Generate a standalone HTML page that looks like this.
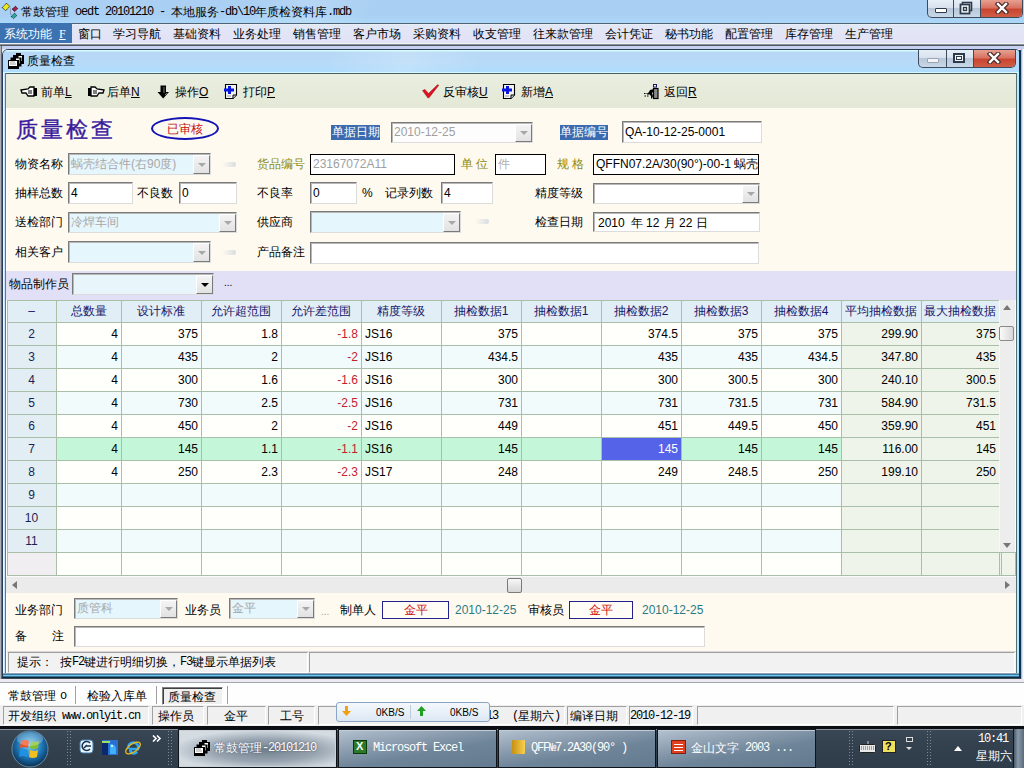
<!DOCTYPE html><html><head><meta charset="utf-8"><style>
*{margin:0;padding:0;box-sizing:border-box}
html,body{width:1024px;height:768px;overflow:hidden;background:#e9e9f3;font-family:"Liberation Sans",sans-serif;font-size:12px;color:#000}
.a{position:absolute}
.t{position:absolute;white-space:nowrap}
.inp{position:absolute;border-top:1px solid #7a7a7a;border-left:1px solid #7a7a7a;border-right:1px solid #dcdcdc;border-bottom:1px solid #dcdcdc;box-shadow:inset 1px 1px 0 #b8b8b8}
.dd{position:absolute;background:linear-gradient(#f4f4f4,#e2e2e2);border:1px solid #fff;border-right-color:#7a7a7a;border-bottom-color:#7a7a7a}
.dd i{position:absolute;left:4px;top:50%;margin-top:-2px;width:0;height:0;border-left:4px solid transparent;border-right:4px solid transparent;border-top:4px solid #a8a8a8}
u{text-decoration:underline}
.c{font-style:normal;display:inline-block;width:1em;text-align:center}
.ttl .c{width:25px}
</style></head><body>
<div class="a" style="left:0px;top:0px;width:1024px;height:23px;background:linear-gradient(180deg,#aacff2 0%,#a9d0f4 70%,#acd8f8 100%)"></div>
<div class="a" style="left:250px;top:0px;width:120px;height:23px;background:linear-gradient(100deg,transparent 0%,rgba(255,255,255,.15) 50%,transparent 100%)"></div>
<svg class="a" style="left:0px;top:0px" width="20" height="20" viewBox="0 0 20 20">
<path d="M10.5 8.5 H11 M10.5 8.5 V14.5 H12" fill="none" stroke="#8898b8" stroke-width="1"/>
<path d="M2.3 7.5 L6.5 3.2 L9.8 6.5 L5.5 10.8 Z" fill="#e8e820" stroke="#101000" stroke-width="1" stroke-dasharray="1 .6"/>
<path d="M12.3 9 L15.5 6.2 L17.8 8.6 L14.6 11.6 Z" fill="#a02050" stroke="#200010" stroke-width="1" stroke-dasharray="1 .6"/>
<path d="M11.3 16.5 L14.5 13.2 L16.8 15.5 L13.6 18.6 Z" fill="#30a8a0" stroke="#002020" stroke-width="1" stroke-dasharray="1 .6"/>
</svg>
<div class="t" style="left:21px;top:5px;font-size:12px;line-height:14px;color:#000;font-family:'Liberation Sans',sans-serif;"><i class="c">常</i><i class="c">鼓</i><i class="c">管</i><i class="c">理</i></div>
<div class="t" style="left:69px;top:5px;font-size:12px;line-height:14px;letter-spacing:-1.2px;color:#000;font-family:'Liberation Mono',monospace;">&nbsp;oedt&nbsp;20101210&nbsp;-&nbsp;</div>
<div class="t" style="left:171px;top:5px;font-size:12px;line-height:14px;color:#000;font-family:'Liberation Sans',sans-serif;"><i class="c">本</i><i class="c">地</i><i class="c">服</i><i class="c">务</i></div>
<div class="t" style="left:219px;top:5px;font-size:12px;line-height:14px;letter-spacing:-1.2px;color:#000;font-family:'Liberation Mono',monospace;">-db\10</div>
<div class="t" style="left:255px;top:5px;font-size:12px;line-height:14px;color:#000;font-family:'Liberation Sans',sans-serif;"><i class="c">年</i><i class="c">质</i><i class="c">检</i><i class="c">资</i><i class="c">料</i><i class="c">库</i></div>
<div class="t" style="left:327px;top:5px;font-size:12px;line-height:14px;letter-spacing:-1.2px;color:#000;font-family:'Liberation Mono',monospace;">.mdb</div>
<div class="a" style="left:927px;top:0px;width:96px;height:18px;border:1px solid #3c4a5c;border-top:none;border-radius:0 0 5px 5px;overflow:hidden;background:linear-gradient(180deg,#e6eef6 0%,#d8e2ee 45%,#b8c8da 50%,#c8d8e8 100%)"><div class="a" style="left:52px;top:0;width:43px;height:18px;background:linear-gradient(180deg,#e8a090 0%,#d87060 45%,#c84430 50%,#d06048 100%);border-left:1px solid #3c4a5c"></div><div class="a" style="left:25px;top:0;width:1px;height:18px;background:#3c4a5c"></div></div>
<div class="a" style="left:935px;top:8px;width:12px;height:5px;background:#fff;border:1px solid #2c3a4c;border-radius:1px"></div>
<svg class="a" style="left:959px;top:1px" width="14" height="14" viewBox="0 0 14 14"><rect x="3.5" y="1.5" width="9" height="8" fill="#fff" stroke="#2c3a4c" stroke-width="1.6"/><rect x="1.5" y="3.5" width="9" height="9" fill="#fff" stroke="#2c3a4c" stroke-width="1.8"/><rect x="4.5" y="6.5" width="3" height="3" fill="none" stroke="#2c3a4c" stroke-width="1.4"/></svg>
<svg class="a" style="left:995px;top:2px" width="14" height="12" viewBox="0 0 14 12"><path d="M3 2 L11 10 M11 2 L3 10" stroke="#4a2a2a" stroke-width="4.6" stroke-linecap="square"/><path d="M3 2 L11 10 M11 2 L3 10" stroke="#fff" stroke-width="2.4" stroke-linecap="square"/></svg>
<div class="a" style="left:0px;top:23px;width:1024px;height:20px;background:linear-gradient(180deg,#e2e8f6,#e2e2f6)"></div>
<div class="a" style="left:0px;top:23px;width:1024px;height:1px;background:#506478"></div>
<div class="a" style="left:0px;top:24px;width:1024px;height:1px;background:#e8eef8"></div>
<div class="a" style="left:0px;top:23px;width:72px;height:20px;background:#3c72b2"></div>
<div class="t" style="left:4px;top:27px;font-size:12px;line-height:14px;color:#fff;font-family:'Liberation Sans',sans-serif;"><i class="c">系</i><i class="c">统</i><i class="c">功</i><i class="c">能</i></div>
<div class="t" style="left:59px;top:27px;font-size:12px;line-height:14px;color:#fff;font-family:'Liberation Serif',serif;"><u>F</u></div>
<div class="t" style="left:78px;top:27px;font-size:12px;line-height:14px;color:#000;font-family:'Liberation Sans',sans-serif;"><i class="c">窗</i><i class="c">口</i></div>
<div class="t" style="left:113px;top:27px;font-size:12px;line-height:14px;color:#000;font-family:'Liberation Sans',sans-serif;"><i class="c">学</i><i class="c">习</i><i class="c">导</i><i class="c">航</i></div>
<div class="t" style="left:173px;top:27px;font-size:12px;line-height:14px;color:#000;font-family:'Liberation Sans',sans-serif;"><i class="c">基</i><i class="c">础</i><i class="c">资</i><i class="c">料</i></div>
<div class="t" style="left:233px;top:27px;font-size:12px;line-height:14px;color:#000;font-family:'Liberation Sans',sans-serif;"><i class="c">业</i><i class="c">务</i><i class="c">处</i><i class="c">理</i></div>
<div class="t" style="left:293px;top:27px;font-size:12px;line-height:14px;color:#000;font-family:'Liberation Sans',sans-serif;"><i class="c">销</i><i class="c">售</i><i class="c">管</i><i class="c">理</i></div>
<div class="t" style="left:353px;top:27px;font-size:12px;line-height:14px;color:#000;font-family:'Liberation Sans',sans-serif;"><i class="c">客</i><i class="c">户</i><i class="c">市</i><i class="c">场</i></div>
<div class="t" style="left:413px;top:27px;font-size:12px;line-height:14px;color:#000;font-family:'Liberation Sans',sans-serif;"><i class="c">采</i><i class="c">购</i><i class="c">资</i><i class="c">料</i></div>
<div class="t" style="left:473px;top:27px;font-size:12px;line-height:14px;color:#000;font-family:'Liberation Sans',sans-serif;"><i class="c">收</i><i class="c">支</i><i class="c">管</i><i class="c">理</i></div>
<div class="t" style="left:533px;top:27px;font-size:12px;line-height:14px;color:#000;font-family:'Liberation Sans',sans-serif;"><i class="c">往</i><i class="c">来</i><i class="c">款</i><i class="c">管</i><i class="c">理</i></div>
<div class="t" style="left:605px;top:27px;font-size:12px;line-height:14px;color:#000;font-family:'Liberation Sans',sans-serif;"><i class="c">会</i><i class="c">计</i><i class="c">凭</i><i class="c">证</i></div>
<div class="t" style="left:665px;top:27px;font-size:12px;line-height:14px;color:#000;font-family:'Liberation Sans',sans-serif;"><i class="c">秘</i><i class="c">书</i><i class="c">功</i><i class="c">能</i></div>
<div class="t" style="left:725px;top:27px;font-size:12px;line-height:14px;color:#000;font-family:'Liberation Sans',sans-serif;"><i class="c">配</i><i class="c">置</i><i class="c">管</i><i class="c">理</i></div>
<div class="t" style="left:785px;top:27px;font-size:12px;line-height:14px;color:#000;font-family:'Liberation Sans',sans-serif;"><i class="c">库</i><i class="c">存</i><i class="c">管</i><i class="c">理</i></div>
<div class="t" style="left:845px;top:27px;font-size:12px;line-height:14px;color:#000;font-family:'Liberation Sans',sans-serif;"><i class="c">生</i><i class="c">产</i><i class="c">管</i><i class="c">理</i></div>
<div class="a" style="left:0px;top:43px;width:1024px;height:1px;background:#f0f4f0"></div>
<div class="a" style="left:0px;top:44px;width:1024px;height:1px;background:#8890a0"></div>
<div class="a" style="left:0px;top:45px;width:1024px;height:1px;background:#505860"></div>
<div class="a" style="left:0px;top:46px;width:1024px;height:633px;background:#e9e9f3"></div>
<div class="a" style="left:0px;top:46px;width:1px;height:633px;background:#b0b0b8"></div>
<div class="a" style="left:1px;top:46px;width:1px;height:633px;background:#686870"></div>
<div class="a" style="left:2px;top:46px;width:1022px;height:3px;background:#c8d0f2"></div>
<div class="a" style="left:2px;top:49px;width:1019px;height:630px;border:1px solid #283c58;border-radius:6px 6px 0 0;background:#b0dcfc"></div>
<div class="a" style="left:3px;top:50px;width:1017px;height:23px;border-radius:5px 5px 0 0;background:linear-gradient(180deg,#d8fcfc 0px,#d8fcfc 1px,#b6d8f6 2px,#b8daf8 50%,#aedcfc 100%)"></div>
<div class="a" style="left:330px;top:51px;width:150px;height:21px;background:linear-gradient(100deg,transparent 0%,rgba(255,255,255,.18) 50%,transparent 100%)"></div>
<div class="a" style="left:3px;top:72px;width:1017px;height:1px;background:#d8f8fc"></div>
<div class="a" style="left:5px;top:73px;width:1011px;height:1px;background:#4a6068"></div>
<div class="a" style="left:3px;top:73px;width:1px;height:606px;background:#e0fcfc"></div>
<div class="a" style="left:4px;top:73px;width:1px;height:606px;background:#c8e4fc"></div>
<div class="a" style="left:5px;top:73px;width:1px;height:606px;background:#607888"></div>
<div class="a" style="left:6px;top:74px;width:1px;height:600px;background:#ffffff"></div>
<div class="a" style="left:1016px;top:73px;width:1px;height:606px;background:#5a6e78"></div>
<div class="a" style="left:1017px;top:73px;width:2px;height:606px;background:#b0ecfc"></div>
<div class="a" style="left:1019px;top:50px;width:2px;height:629px;background:#0a3458"></div>
<div class="a" style="left:1021px;top:49px;width:1px;height:630px;background:#a8bcd8"></div>
<div class="a" style="left:1022px;top:49px;width:1px;height:630px;background:#e0e4f0"></div>
<div class="a" style="left:1023px;top:49px;width:1px;height:630px;background:#fafafa"></div>
<div class="a" style="left:3px;top:673px;width:1016px;height:1px;background:#90a0b0"></div>
<div class="a" style="left:3px;top:674px;width:1016px;height:1px;background:#3a78a0"></div>
<div class="a" style="left:3px;top:675px;width:1016px;height:1px;background:#70c8f0"></div>
<div class="a" style="left:3px;top:676px;width:1016px;height:1px;background:#3a7090"></div>
<div class="a" style="left:2px;top:677px;width:1019px;height:1px;background:#0a2a40"></div>
<div class="a" style="left:2px;top:678px;width:1019px;height:1px;background:#404850"></div>
<svg class="a" style="left:8px;top:52px" width="17" height="17" viewBox="0 0 17 17"><path d="M5 3 h3 v-2 h5 v2 h3 v9 h-11 Z" fill="#000"/><rect x="6" y="4" width="8" height="5" fill="#fff"/><path d="M2.5 5.5 h3 v-2 h5 v2 h3 v9 h-11 Z" fill="#000"/><rect x="3.5" y="6.5" width="8" height="5" fill="#fff"/><path d="M0 8 h3 v-2 h5 v2 h3 v9 h-11 Z" fill="#000"/><rect x="1" y="9" width="8" height="5" fill="#fff"/><path d="M2 10 h5 M2 12 h3 M5 12 h3" stroke="#888" stroke-width=".8"/></svg>
<div class="t" style="left:27px;top:54px;font-size:12px;line-height:14px;color:#000;font-family:'Liberation Sans',sans-serif;"><i class="c">质</i><i class="c">量</i><i class="c">检</i><i class="c">查</i></div>
<div class="a" style="left:918px;top:50px;width:98px;height:18px;border:1px solid #3c4a5c;border-top:none;border-radius:0 0 5px 5px;overflow:hidden;background:linear-gradient(180deg,#e6eef6 0%,#d8e2ee 45%,#b8c8da 50%,#c8d8e8 100%)"><div class="a" style="left:54px;top:0;width:43px;height:18px;background:linear-gradient(180deg,#e8a090 0%,#d87060 45%,#c84430 50%,#d06048 100%);border-left:1px solid #3c4a5c"></div><div class="a" style="left:27px;top:0;width:1px;height:18px;background:#3c4a5c"></div></div>
<div class="a" style="left:927px;top:58px;width:12px;height:5px;background:#f4f4f8;border:1px solid #9aa4b0;border-radius:1px"></div>
<div class="a" style="left:953px;top:53px;width:12px;height:10px;border:2px solid #2c3a4c;background:#f0f4f8"></div>
<div class="a" style="left:956px;top:56px;width:6px;height:4px;border:1px solid #2c3a4c;background:#fff"></div>
<svg class="a" style="left:987px;top:52px" width="14" height="12" viewBox="0 0 14 12"><path d="M3 2 L11 10 M11 2 L3 10" stroke="#4a2a2a" stroke-width="4.6" stroke-linecap="square"/><path d="M3 2 L11 10 M11 2 L3 10" stroke="#fff" stroke-width="2.4" stroke-linecap="square"/></svg>
<div class="a" style="left:6px;top:74px;width:1010px;height:34px;background:linear-gradient(180deg,#eaeee0 0%,#e4e8d6 100%)"></div>
<svg class="a" style="left:20px;top:86px" width="18" height="12" viewBox="0 0 18 12"><path d="M1 4 L8 3 L10 1 L14 1 L14 10 L8 10 L6 7 L2 7 Z" fill="#fff" stroke="#000" stroke-width="1.3"/><rect x="14" y="2" width="3" height="8" fill="#000"/><path d="M8 5 L12 5 M8 7 L12 7" stroke="#000"/></svg>
<div class="t" style="left:41px;top:85px;font-size:12px;line-height:14px;color:#000;font-family:'Liberation Sans',sans-serif;"><i class="c">前</i><i class="c">单</i><u>L</u></div>
<svg class="a" style="left:87px;top:86px" width="18" height="12" viewBox="0 0 18 12"><path d="M17 4 L10 3 L8 1 L4 1 L4 10 L10 10 L12 7 L16 7 Z" fill="#fff" stroke="#000" stroke-width="1.3"/><rect x="1" y="2" width="3" height="8" fill="#000"/><path d="M6 5 L10 5 M6 7 L10 7" stroke="#000"/></svg>
<div class="t" style="left:107px;top:85px;font-size:12px;line-height:14px;color:#000;font-family:'Liberation Sans',sans-serif;"><i class="c">后</i><i class="c">单</i><u>N</u></div>
<svg class="a" style="left:157px;top:85px" width="14" height="14" viewBox="0 0 14 14"><path d="M3.5 0.5 L9 0.5 L9 7 L12 7 L6.2 13.5 L0.5 7 L3.5 7 Z" fill="#000"/><path d="M7 2 L7 8 M8 10 L10 8" stroke="#888" stroke-width=".9"/></svg>
<div class="t" style="left:175px;top:85px;font-size:12px;line-height:14px;color:#000;font-family:'Liberation Sans',sans-serif;"><i class="c">操</i><i class="c">作</i><u>O</u></div>
<svg class="a" style="left:224px;top:84px" width="14" height="16" viewBox="0 0 14 16"><path d="M1.5 0.5 L12.5 0.5 L12.5 11 L9 14.5 L1.5 14.5 Z" fill="#f4f4f4" stroke="#000" stroke-width="1.1"/><path d="M12.5 11 L9 11 L9 14.5" fill="#ccc" stroke="#000" stroke-width="1"/><path d="M4 2 L7 2 L7 4.5 L10 4.5 L10 7.5 L7 7.5 L7 10 L4 10 L4 7.5 L0 7.5 L0 4.5 L4 4.5 Z" fill="#0818e0"/><path d="M3 12 h4" stroke="#999"/></svg>
<div class="t" style="left:243px;top:85px;font-size:12px;line-height:14px;color:#000;font-family:'Liberation Sans',sans-serif;"><i class="c">打</i><i class="c">印</i><u>P</u></div>
<svg class="a" style="left:422px;top:84px" width="18" height="15" viewBox="0 0 18 15"><path d="M0.5 6.5 L3 5.5 L6.5 9.5 L15.5 0.8 L16.8 1.2 L7 13.8 L5.8 13.8 Z" fill="#e01020" stroke="#901010" stroke-width=".5"/></svg>
<div class="t" style="left:443px;top:85px;font-size:12px;line-height:14px;color:#000;font-family:'Liberation Sans',sans-serif;"><i class="c">反</i><i class="c">审</i><i class="c">核</i><u>U</u></div>
<svg class="a" style="left:502px;top:84px" width="14" height="16" viewBox="0 0 14 16"><path d="M1.5 0.5 L12.5 0.5 L12.5 11 L9 14.5 L1.5 14.5 Z" fill="#f4f4f4" stroke="#000" stroke-width="1.1"/><path d="M12.5 11 L9 11 L9 14.5" fill="#ccc" stroke="#000" stroke-width="1"/><path d="M4 2 L7 2 L7 4.5 L10 4.5 L10 7.5 L7 7.5 L7 10 L4 10 L4 7.5 L0 7.5 L0 4.5 L4 4.5 Z" fill="#0818e0"/><path d="M3 12 h4" stroke="#999"/></svg>
<div class="t" style="left:521px;top:85px;font-size:12px;line-height:14px;color:#000;font-family:'Liberation Sans',sans-serif;"><i class="c">新</i><i class="c">增</i><u>A</u></div>
<svg class="a" style="left:644px;top:84px" width="16" height="16" viewBox="0 0 16 16"><rect x="9.5" y="4.5" width="4.5" height="10" fill="#8a8a8a" stroke="#000" stroke-width="1.2"/><rect x="9.5" y="0.5" width="3" height="2.5" fill="#fff" stroke="#1a1a60" stroke-width="1"/><path d="M6 6 L10 5 L10 7 L8 9 L9 12 L8 14.5 L7 14.5 L7 12 L5 10 L4 11 L3 10 L5 8 Z" fill="#000"/><path d="M0 9.5 h1.5 M2.5 9.5 h1 M0.5 12 h1.5 M3 12 h1.5" stroke="#000" stroke-width="1"/></svg>
<div class="t" style="left:664px;top:85px;font-size:12px;line-height:14px;color:#000;font-family:'Liberation Sans',sans-serif;"><i class="c">返</i><i class="c">回</i><u>R</u></div>
<div class="a" style="left:7px;top:108px;width:1009px;height:163px;background:#fffaf0"></div>
<div class="t" style="left:14px;top:118px;font-size:22px;line-height:24px;color:#3a1c9e;font-family:'Liberation Sans',sans-serif;-webkit-text-stroke:.4px #3a1c9e"><span class="ttl"><i class="c">质</i><i class="c">量</i><i class="c">检</i><i class="c">查</i></span></div>
<div class="a" style="left:151px;top:117px;width:68px;height:23px;border:2px solid #1414b4;border-radius:50%"></div>
<div class="t" style="left:167px;top:122px;font-size:12px;line-height:14px;color:#c01010;font-family:'Liberation Sans',sans-serif;"><i class="c">已</i><i class="c">审</i><i class="c">核</i></div>
<div class="t" style="left:15px;top:157px;font-size:12px;line-height:14px;color:#000;font-family:'Liberation Sans',sans-serif;"><i class="c">物</i><i class="c">资</i><i class="c">名</i><i class="c">称</i></div>
<div class="t" style="left:15px;top:186px;font-size:12px;line-height:14px;color:#000;font-family:'Liberation Sans',sans-serif;"><i class="c">抽</i><i class="c">样</i><i class="c">总</i><i class="c">数</i></div>
<div class="t" style="left:137px;top:186px;font-size:12px;line-height:14px;color:#000;font-family:'Liberation Sans',sans-serif;"><i class="c">不</i><i class="c">良</i><i class="c">数</i></div>
<div class="t" style="left:15px;top:215px;font-size:12px;line-height:14px;color:#000;font-family:'Liberation Sans',sans-serif;"><i class="c">送</i><i class="c">检</i><i class="c">部</i><i class="c">门</i></div>
<div class="t" style="left:15px;top:245px;font-size:12px;line-height:14px;color:#000;font-family:'Liberation Sans',sans-serif;"><i class="c">相</i><i class="c">关</i><i class="c">客</i><i class="c">户</i></div>
<div class="t" style="left:257px;top:157px;font-size:12px;line-height:14px;color:#8a8a10;font-family:'Liberation Sans',sans-serif;"><i class="c">货</i><i class="c">品</i><i class="c">编</i><i class="c">号</i></div>
<div class="t" style="left:461px;top:157px;font-size:12px;line-height:14px;color:#8a8a10;font-family:'Liberation Sans',sans-serif;"><i class="c">单</i> <i class="c">位</i></div>
<div class="t" style="left:557px;top:157px;font-size:12px;line-height:14px;color:#8a8a10;font-family:'Liberation Sans',sans-serif;"><i class="c">规</i> <i class="c">格</i></div>
<div class="t" style="left:257px;top:186px;font-size:12px;line-height:14px;color:#000;font-family:'Liberation Sans',sans-serif;"><i class="c">不</i><i class="c">良</i><i class="c">率</i></div>
<div class="t" style="left:362px;top:186px;font-size:12px;line-height:14px;color:#000;font-family:'Liberation Sans',sans-serif;">%</div>
<div class="t" style="left:385px;top:186px;font-size:12px;line-height:14px;color:#000;font-family:'Liberation Sans',sans-serif;"><i class="c">记</i><i class="c">录</i><i class="c">列</i><i class="c">数</i></div>
<div class="t" style="left:535px;top:186px;font-size:12px;line-height:14px;color:#000;font-family:'Liberation Sans',sans-serif;"><i class="c">精</i><i class="c">度</i><i class="c">等</i><i class="c">级</i></div>
<div class="t" style="left:257px;top:215px;font-size:12px;line-height:14px;color:#000;font-family:'Liberation Sans',sans-serif;"><i class="c">供</i><i class="c">应</i><i class="c">商</i></div>
<div class="t" style="left:535px;top:215px;font-size:12px;line-height:14px;color:#000;font-family:'Liberation Sans',sans-serif;"><i class="c">检</i><i class="c">查</i><i class="c">日</i><i class="c">期</i></div>
<div class="t" style="left:257px;top:245px;font-size:12px;line-height:14px;color:#000;font-family:'Liberation Sans',sans-serif;"><i class="c">产</i><i class="c">品</i><i class="c">备</i><i class="c">注</i></div>
<div class="a" style="left:331px;top:125px;width:49px;height:15px;background:#3a6ab0"></div>
<div class="t" style="left:332px;top:125px;font-size:12px;line-height:14px;color:#fff;font-family:'Liberation Sans',sans-serif;"><i class="c">单</i><i class="c">据</i><i class="c">日</i><i class="c">期</i></div>
<div class="a" style="left:560px;top:125px;width:48px;height:15px;background:#3a6ab0"></div>
<div class="t" style="left:560px;top:125px;font-size:12px;line-height:14px;color:#fff;font-family:'Liberation Sans',sans-serif;"><i class="c">单</i><i class="c">据</i><i class="c">编</i><i class="c">号</i></div>
<div class="inp" style="left:391px;top:122px;width:142px;height:21px;background:#fdfdfd;"></div>
<div class="dd" style="left:515px;top:124px;width:17px;height:18px"><i style="border-top-color:#a8a8a8"></i></div>
<div class="t" style="left:394px;top:125px;font-size:12px;line-height:14px;color:#a0a0a0;font-family:'Liberation Sans',sans-serif;">2010-12-25</div>
<div class="inp" style="left:622px;top:121px;width:140px;height:22px;background:#fff;"></div>
<div class="t" style="left:625px;top:125px;font-size:12px;line-height:14px;color:#000;font-family:'Liberation Sans',sans-serif;">QA-10-12-25-0001</div>
<div class="inp" style="left:68px;top:153px;width:143px;height:22px;background:#e6f6fd;"></div>
<div class="dd" style="left:193px;top:155px;width:17px;height:19px"><i style="border-top-color:#a8a8a8"></i></div>
<div class="t" style="left:71px;top:157px;font-size:12px;line-height:14px;color:#a8a8a8;font-family:'Liberation Sans',sans-serif;"><i class="c">蜗</i><i class="c">壳</i><i class="c">结</i><i class="c">合</i><i class="c">件</i>(<i class="c">右</i>90<i class="c">度</i>)</div>
<div class="inp" style="left:310px;top:154px;width:145px;height:21px;background:#fff;border:1px solid #000;box-shadow:none"></div>
<div class="t" style="left:313px;top:157px;font-size:12px;line-height:14px;color:#a0a0a0;font-family:'Liberation Sans',sans-serif;">23167072A11</div>
<div class="inp" style="left:495px;top:154px;width:51px;height:21px;background:#fff;border:1px solid #000;box-shadow:none"></div>
<div class="t" style="left:498px;top:157px;font-size:12px;line-height:14px;color:#b0b0b0;font-family:'Liberation Sans',sans-serif;"><i class="c">件</i></div>
<div class="inp" style="left:593px;top:154px;width:166px;height:21px;background:#fff;border:1px solid #000;box-shadow:none;overflow:hidden"></div>
<div class="t" style="left:596px;top:157px;font-size:12px;line-height:14px;color:#000;font-family:'Liberation Sans',sans-serif;">QFFN07.2A/30(90°)-00-1 <i class="c">蜗</i><i class="c">壳</i></div>
<div class="inp" style="left:68px;top:182px;width:65px;height:22px;background:#fff;"></div>
<div class="t" style="left:71px;top:186px;font-size:12px;line-height:14px;color:#000;font-family:'Liberation Sans',sans-serif;">4</div>
<div class="inp" style="left:179px;top:182px;width:58px;height:22px;background:#fff;"></div>
<div class="t" style="left:182px;top:186px;font-size:12px;line-height:14px;color:#000;font-family:'Liberation Sans',sans-serif;">0</div>
<div class="inp" style="left:310px;top:182px;width:47px;height:22px;background:#fff;"></div>
<div class="t" style="left:313px;top:186px;font-size:12px;line-height:14px;color:#000;font-family:'Liberation Sans',sans-serif;">0</div>
<div class="inp" style="left:441px;top:182px;width:52px;height:22px;background:#fff;"></div>
<div class="t" style="left:444px;top:186px;font-size:12px;line-height:14px;color:#000;font-family:'Liberation Sans',sans-serif;">4</div>
<div class="inp" style="left:593px;top:183px;width:167px;height:21px;background:#fff;"></div>
<div class="dd" style="left:742px;top:185px;width:17px;height:18px"><i style="border-top-color:#a8a8a8"></i></div>
<div class="inp" style="left:68px;top:212px;width:169px;height:21px;background:#e6f6fd;"></div>
<div class="dd" style="left:219px;top:214px;width:17px;height:18px"><i style="border-top-color:#a8a8a8"></i></div>
<div class="t" style="left:71px;top:215px;font-size:12px;line-height:14px;color:#a8a8a8;font-family:'Liberation Sans',sans-serif;"><i class="c">冷</i><i class="c">焊</i><i class="c">车</i><i class="c">间</i></div>
<div class="inp" style="left:310px;top:211px;width:151px;height:22px;background:#e6f6fd;"></div>
<div class="dd" style="left:443px;top:213px;width:17px;height:19px"><i style="border-top-color:#a8a8a8"></i></div>
<div class="inp" style="left:593px;top:212px;width:167px;height:20px;background:#fff;"></div>
<div class="t" style="left:598px;top:216px;font-size:12px;line-height:14px;color:#000;font-family:'Liberation Sans',sans-serif;">2010</div>
<div class="t" style="left:631px;top:216px;font-size:12px;line-height:14px;color:#000;font-family:'Liberation Sans',sans-serif;"><i class="c">年</i></div>
<div class="t" style="left:646px;top:216px;font-size:12px;line-height:14px;color:#000;font-family:'Liberation Sans',sans-serif;">12</div>
<div class="t" style="left:664px;top:216px;font-size:12px;line-height:14px;color:#000;font-family:'Liberation Sans',sans-serif;"><i class="c">月</i></div>
<div class="t" style="left:679px;top:216px;font-size:12px;line-height:14px;color:#000;font-family:'Liberation Sans',sans-serif;">22</div>
<div class="t" style="left:696px;top:216px;font-size:12px;line-height:14px;color:#000;font-family:'Liberation Sans',sans-serif;"><i class="c">日</i></div>
<div class="inp" style="left:68px;top:241px;width:143px;height:22px;background:#e6f6fd;"></div>
<div class="dd" style="left:193px;top:243px;width:17px;height:19px"><i style="border-top-color:#a8a8a8"></i></div>
<div class="inp" style="left:310px;top:242px;width:449px;height:22px;background:#fff;"></div>
<div class="a" style="left:222px;top:162px;width:14px;height:5px;background:linear-gradient(90deg,rgba(200,210,220,0),rgba(200,210,220,.7));border-radius:2px"></div>
<div class="a" style="left:222px;top:250px;width:14px;height:5px;background:linear-gradient(90deg,rgba(200,210,220,0),rgba(200,210,220,.7));border-radius:2px"></div>
<div class="a" style="left:475px;top:219px;width:14px;height:5px;background:linear-gradient(90deg,rgba(200,210,220,0),rgba(200,210,220,.7));border-radius:2px"></div>
<div class="a" style="left:6px;top:271px;width:1010px;height:29px;background:#e1e0f7"></div>
<div class="t" style="left:9px;top:277px;font-size:12px;line-height:14px;color:#000;font-family:'Liberation Sans',sans-serif;"><i class="c">物</i><i class="c">品</i><i class="c">制</i><i class="c">作</i><i class="c">员</i></div>
<div class="inp" style="left:72px;top:273px;width:142px;height:22px;background:#e8f6fc;"></div>
<div class="dd" style="left:196px;top:275px;width:17px;height:19px"><i style="border-top-color:#000"></i></div>
<div class="t" style="left:224px;top:277px;font-size:10px;line-height:12px;color:#000;font-family:'Liberation Sans',sans-serif;">...</div>
<div class="a" style="left:7px;top:300px;width:1009px;height:276px;background:#fdfdf8"></div>
<div class="a" style="left:8px;top:301px;width:991px;height:21px;background:#e2eef5"></div>
<div class="t" style="left:7px;top:304px;width:49px;text-align:center;font-size:12px;line-height:14px;color:#15156a;overflow:hidden">–</div>
<div class="t" style="left:56px;top:304px;width:65px;text-align:center;font-size:12px;line-height:14px;color:#15156a;overflow:hidden"><i class="c">总</i><i class="c">数</i><i class="c">量</i></div>
<div class="t" style="left:121px;top:304px;width:80px;text-align:center;font-size:12px;line-height:14px;color:#15156a;overflow:hidden"><i class="c">设</i><i class="c">计</i><i class="c">标</i><i class="c">准</i></div>
<div class="t" style="left:201px;top:304px;width:80px;text-align:center;font-size:12px;line-height:14px;color:#15156a;overflow:hidden"><i class="c">允</i><i class="c">许</i><i class="c">超</i><i class="c">范</i><i class="c">围</i></div>
<div class="t" style="left:281px;top:304px;width:80px;text-align:center;font-size:12px;line-height:14px;color:#15156a;overflow:hidden"><i class="c">允</i><i class="c">许</i><i class="c">差</i><i class="c">范</i><i class="c">围</i></div>
<div class="t" style="left:361px;top:304px;width:80px;text-align:center;font-size:12px;line-height:14px;color:#15156a;overflow:hidden"><i class="c">精</i><i class="c">度</i><i class="c">等</i><i class="c">级</i></div>
<div class="t" style="left:441px;top:304px;width:80px;text-align:center;font-size:12px;line-height:14px;color:#15156a;overflow:hidden"><i class="c">抽</i><i class="c">检</i><i class="c">数</i><i class="c">据</i>1</div>
<div class="t" style="left:521px;top:304px;width:80px;text-align:center;font-size:12px;line-height:14px;color:#15156a;overflow:hidden"><i class="c">抽</i><i class="c">检</i><i class="c">数</i><i class="c">据</i>1</div>
<div class="t" style="left:601px;top:304px;width:80px;text-align:center;font-size:12px;line-height:14px;color:#15156a;overflow:hidden"><i class="c">抽</i><i class="c">检</i><i class="c">数</i><i class="c">据</i>2</div>
<div class="t" style="left:681px;top:304px;width:80px;text-align:center;font-size:12px;line-height:14px;color:#15156a;overflow:hidden"><i class="c">抽</i><i class="c">检</i><i class="c">数</i><i class="c">据</i>3</div>
<div class="t" style="left:761px;top:304px;width:80px;text-align:center;font-size:12px;line-height:14px;color:#15156a;overflow:hidden"><i class="c">抽</i><i class="c">检</i><i class="c">数</i><i class="c">据</i>4</div>
<div class="t" style="left:841px;top:304px;width:80px;text-align:center;font-size:12px;line-height:14px;color:#15156a;overflow:hidden"><i class="c">平</i><i class="c">均</i><i class="c">抽</i><i class="c">检</i><i class="c">数</i><i class="c">据</i></div>
<div class="t" style="left:921px;top:304px;width:78px;text-align:center;font-size:12px;line-height:14px;color:#15156a;overflow:hidden"><i class="c">最</i><i class="c">大</i><i class="c">抽</i><i class="c">检</i><i class="c">数</i><i class="c">据</i></div>
<div class="a" style="left:57px;top:323px;width:784px;height:22px;background:#fffffc"></div>
<div class="a" style="left:842px;top:323px;width:157px;height:22px;background:#eef4e9"></div>
<div class="a" style="left:8px;top:323px;width:48px;height:22px;background:#e2eef4"></div>
<div class="t" style="left:7px;top:327px;width:49px;text-align:center;font-size:12px;line-height:14px;color:#1a1f55">2</div>
<div class="t" style="left:56px;top:327px;width:62px;text-align:right;font-size:12px;line-height:14px;color:#000;overflow:hidden">4</div>
<div class="t" style="left:121px;top:327px;width:77px;text-align:right;font-size:12px;line-height:14px;color:#000;overflow:hidden">375</div>
<div class="t" style="left:201px;top:327px;width:77px;text-align:right;font-size:12px;line-height:14px;color:#000;overflow:hidden">1.8</div>
<div class="t" style="left:281px;top:327px;width:77px;text-align:right;font-size:12px;line-height:14px;color:#c42030;overflow:hidden">-1.8</div>
<div class="t" style="left:365px;top:327px;font-size:12px;line-height:14px;color:#000">JS16</div>
<div class="t" style="left:441px;top:327px;width:77px;text-align:right;font-size:12px;line-height:14px;color:#000;overflow:hidden">375</div>
<div class="t" style="left:601px;top:327px;width:77px;text-align:right;font-size:12px;line-height:14px;color:#000;overflow:hidden">374.5</div>
<div class="t" style="left:681px;top:327px;width:77px;text-align:right;font-size:12px;line-height:14px;color:#000;overflow:hidden">375</div>
<div class="t" style="left:761px;top:327px;width:77px;text-align:right;font-size:12px;line-height:14px;color:#000;overflow:hidden">375</div>
<div class="t" style="left:841px;top:327px;width:77px;text-align:right;font-size:12px;line-height:14px;color:#000;overflow:hidden">299.90</div>
<div class="t" style="left:921px;top:327px;width:75px;text-align:right;font-size:12px;line-height:14px;color:#000;overflow:hidden">375</div>
<div class="a" style="left:57px;top:346px;width:784px;height:22px;background:#f1fbfc"></div>
<div class="a" style="left:842px;top:346px;width:157px;height:22px;background:#eef4e9"></div>
<div class="a" style="left:8px;top:346px;width:48px;height:22px;background:#e2eef4"></div>
<div class="t" style="left:7px;top:350px;width:49px;text-align:center;font-size:12px;line-height:14px;color:#1a1f55">3</div>
<div class="t" style="left:56px;top:350px;width:62px;text-align:right;font-size:12px;line-height:14px;color:#000;overflow:hidden">4</div>
<div class="t" style="left:121px;top:350px;width:77px;text-align:right;font-size:12px;line-height:14px;color:#000;overflow:hidden">435</div>
<div class="t" style="left:201px;top:350px;width:77px;text-align:right;font-size:12px;line-height:14px;color:#000;overflow:hidden">2</div>
<div class="t" style="left:281px;top:350px;width:77px;text-align:right;font-size:12px;line-height:14px;color:#c42030;overflow:hidden">-2</div>
<div class="t" style="left:365px;top:350px;font-size:12px;line-height:14px;color:#000">JS16</div>
<div class="t" style="left:441px;top:350px;width:77px;text-align:right;font-size:12px;line-height:14px;color:#000;overflow:hidden">434.5</div>
<div class="t" style="left:601px;top:350px;width:77px;text-align:right;font-size:12px;line-height:14px;color:#000;overflow:hidden">435</div>
<div class="t" style="left:681px;top:350px;width:77px;text-align:right;font-size:12px;line-height:14px;color:#000;overflow:hidden">435</div>
<div class="t" style="left:761px;top:350px;width:77px;text-align:right;font-size:12px;line-height:14px;color:#000;overflow:hidden">434.5</div>
<div class="t" style="left:841px;top:350px;width:77px;text-align:right;font-size:12px;line-height:14px;color:#000;overflow:hidden">347.80</div>
<div class="t" style="left:921px;top:350px;width:75px;text-align:right;font-size:12px;line-height:14px;color:#000;overflow:hidden">435</div>
<div class="a" style="left:57px;top:369px;width:784px;height:22px;background:#fffffc"></div>
<div class="a" style="left:842px;top:369px;width:157px;height:22px;background:#eef4e9"></div>
<div class="a" style="left:8px;top:369px;width:48px;height:22px;background:#e2eef4"></div>
<div class="t" style="left:7px;top:373px;width:49px;text-align:center;font-size:12px;line-height:14px;color:#1a1f55">4</div>
<div class="t" style="left:56px;top:373px;width:62px;text-align:right;font-size:12px;line-height:14px;color:#000;overflow:hidden">4</div>
<div class="t" style="left:121px;top:373px;width:77px;text-align:right;font-size:12px;line-height:14px;color:#000;overflow:hidden">300</div>
<div class="t" style="left:201px;top:373px;width:77px;text-align:right;font-size:12px;line-height:14px;color:#000;overflow:hidden">1.6</div>
<div class="t" style="left:281px;top:373px;width:77px;text-align:right;font-size:12px;line-height:14px;color:#c42030;overflow:hidden">-1.6</div>
<div class="t" style="left:365px;top:373px;font-size:12px;line-height:14px;color:#000">JS16</div>
<div class="t" style="left:441px;top:373px;width:77px;text-align:right;font-size:12px;line-height:14px;color:#000;overflow:hidden">300</div>
<div class="t" style="left:601px;top:373px;width:77px;text-align:right;font-size:12px;line-height:14px;color:#000;overflow:hidden">300</div>
<div class="t" style="left:681px;top:373px;width:77px;text-align:right;font-size:12px;line-height:14px;color:#000;overflow:hidden">300.5</div>
<div class="t" style="left:761px;top:373px;width:77px;text-align:right;font-size:12px;line-height:14px;color:#000;overflow:hidden">300</div>
<div class="t" style="left:841px;top:373px;width:77px;text-align:right;font-size:12px;line-height:14px;color:#000;overflow:hidden">240.10</div>
<div class="t" style="left:921px;top:373px;width:75px;text-align:right;font-size:12px;line-height:14px;color:#000;overflow:hidden">300.5</div>
<div class="a" style="left:57px;top:392px;width:784px;height:22px;background:#f1fbfc"></div>
<div class="a" style="left:842px;top:392px;width:157px;height:22px;background:#eef4e9"></div>
<div class="a" style="left:8px;top:392px;width:48px;height:22px;background:#e2eef4"></div>
<div class="t" style="left:7px;top:396px;width:49px;text-align:center;font-size:12px;line-height:14px;color:#1a1f55">5</div>
<div class="t" style="left:56px;top:396px;width:62px;text-align:right;font-size:12px;line-height:14px;color:#000;overflow:hidden">4</div>
<div class="t" style="left:121px;top:396px;width:77px;text-align:right;font-size:12px;line-height:14px;color:#000;overflow:hidden">730</div>
<div class="t" style="left:201px;top:396px;width:77px;text-align:right;font-size:12px;line-height:14px;color:#000;overflow:hidden">2.5</div>
<div class="t" style="left:281px;top:396px;width:77px;text-align:right;font-size:12px;line-height:14px;color:#c42030;overflow:hidden">-2.5</div>
<div class="t" style="left:365px;top:396px;font-size:12px;line-height:14px;color:#000">JS16</div>
<div class="t" style="left:441px;top:396px;width:77px;text-align:right;font-size:12px;line-height:14px;color:#000;overflow:hidden">731</div>
<div class="t" style="left:601px;top:396px;width:77px;text-align:right;font-size:12px;line-height:14px;color:#000;overflow:hidden">731</div>
<div class="t" style="left:681px;top:396px;width:77px;text-align:right;font-size:12px;line-height:14px;color:#000;overflow:hidden">731.5</div>
<div class="t" style="left:761px;top:396px;width:77px;text-align:right;font-size:12px;line-height:14px;color:#000;overflow:hidden">731</div>
<div class="t" style="left:841px;top:396px;width:77px;text-align:right;font-size:12px;line-height:14px;color:#000;overflow:hidden">584.90</div>
<div class="t" style="left:921px;top:396px;width:75px;text-align:right;font-size:12px;line-height:14px;color:#000;overflow:hidden">731.5</div>
<div class="a" style="left:57px;top:415px;width:784px;height:22px;background:#fffffc"></div>
<div class="a" style="left:842px;top:415px;width:157px;height:22px;background:#eef4e9"></div>
<div class="a" style="left:8px;top:415px;width:48px;height:22px;background:#e2eef4"></div>
<div class="t" style="left:7px;top:419px;width:49px;text-align:center;font-size:12px;line-height:14px;color:#1a1f55">6</div>
<div class="t" style="left:56px;top:419px;width:62px;text-align:right;font-size:12px;line-height:14px;color:#000;overflow:hidden">4</div>
<div class="t" style="left:121px;top:419px;width:77px;text-align:right;font-size:12px;line-height:14px;color:#000;overflow:hidden">450</div>
<div class="t" style="left:201px;top:419px;width:77px;text-align:right;font-size:12px;line-height:14px;color:#000;overflow:hidden">2</div>
<div class="t" style="left:281px;top:419px;width:77px;text-align:right;font-size:12px;line-height:14px;color:#c42030;overflow:hidden">-2</div>
<div class="t" style="left:365px;top:419px;font-size:12px;line-height:14px;color:#000">JS16</div>
<div class="t" style="left:441px;top:419px;width:77px;text-align:right;font-size:12px;line-height:14px;color:#000;overflow:hidden">449</div>
<div class="t" style="left:601px;top:419px;width:77px;text-align:right;font-size:12px;line-height:14px;color:#000;overflow:hidden">451</div>
<div class="t" style="left:681px;top:419px;width:77px;text-align:right;font-size:12px;line-height:14px;color:#000;overflow:hidden">449.5</div>
<div class="t" style="left:761px;top:419px;width:77px;text-align:right;font-size:12px;line-height:14px;color:#000;overflow:hidden">450</div>
<div class="t" style="left:841px;top:419px;width:77px;text-align:right;font-size:12px;line-height:14px;color:#000;overflow:hidden">359.90</div>
<div class="t" style="left:921px;top:419px;width:75px;text-align:right;font-size:12px;line-height:14px;color:#000;overflow:hidden">451</div>
<div class="a" style="left:57px;top:438px;width:784px;height:22px;background:#c4f7da"></div>
<div class="a" style="left:842px;top:438px;width:157px;height:22px;background:#eef4e9"></div>
<div class="a" style="left:8px;top:438px;width:48px;height:22px;background:#e2eef4"></div>
<div class="a" style="left:602px;top:438px;width:79px;height:22px;background:#5563e8"></div>
<div class="t" style="left:7px;top:442px;width:49px;text-align:center;font-size:12px;line-height:14px;color:#1a1f55">7</div>
<div class="t" style="left:56px;top:442px;width:62px;text-align:right;font-size:12px;line-height:14px;color:#000;overflow:hidden">4</div>
<div class="t" style="left:121px;top:442px;width:77px;text-align:right;font-size:12px;line-height:14px;color:#000;overflow:hidden">145</div>
<div class="t" style="left:201px;top:442px;width:77px;text-align:right;font-size:12px;line-height:14px;color:#000;overflow:hidden">1.1</div>
<div class="t" style="left:281px;top:442px;width:77px;text-align:right;font-size:12px;line-height:14px;color:#c42030;overflow:hidden">-1.1</div>
<div class="t" style="left:365px;top:442px;font-size:12px;line-height:14px;color:#000">JS16</div>
<div class="t" style="left:441px;top:442px;width:77px;text-align:right;font-size:12px;line-height:14px;color:#000;overflow:hidden">145</div>
<div class="t" style="left:601px;top:442px;width:77px;text-align:right;font-size:12px;line-height:14px;color:#fff;overflow:hidden">145</div>
<div class="t" style="left:681px;top:442px;width:77px;text-align:right;font-size:12px;line-height:14px;color:#000;overflow:hidden">145</div>
<div class="t" style="left:761px;top:442px;width:77px;text-align:right;font-size:12px;line-height:14px;color:#000;overflow:hidden">145</div>
<div class="t" style="left:841px;top:442px;width:77px;text-align:right;font-size:12px;line-height:14px;color:#000;overflow:hidden">116.00</div>
<div class="t" style="left:921px;top:442px;width:75px;text-align:right;font-size:12px;line-height:14px;color:#000;overflow:hidden">145</div>
<div class="a" style="left:57px;top:461px;width:784px;height:22px;background:#fffffc"></div>
<div class="a" style="left:842px;top:461px;width:157px;height:22px;background:#eef4e9"></div>
<div class="a" style="left:8px;top:461px;width:48px;height:22px;background:#e2eef4"></div>
<div class="t" style="left:7px;top:465px;width:49px;text-align:center;font-size:12px;line-height:14px;color:#1a1f55">8</div>
<div class="t" style="left:56px;top:465px;width:62px;text-align:right;font-size:12px;line-height:14px;color:#000;overflow:hidden">4</div>
<div class="t" style="left:121px;top:465px;width:77px;text-align:right;font-size:12px;line-height:14px;color:#000;overflow:hidden">250</div>
<div class="t" style="left:201px;top:465px;width:77px;text-align:right;font-size:12px;line-height:14px;color:#000;overflow:hidden">2.3</div>
<div class="t" style="left:281px;top:465px;width:77px;text-align:right;font-size:12px;line-height:14px;color:#c42030;overflow:hidden">-2.3</div>
<div class="t" style="left:365px;top:465px;font-size:12px;line-height:14px;color:#000">JS17</div>
<div class="t" style="left:441px;top:465px;width:77px;text-align:right;font-size:12px;line-height:14px;color:#000;overflow:hidden">248</div>
<div class="t" style="left:601px;top:465px;width:77px;text-align:right;font-size:12px;line-height:14px;color:#000;overflow:hidden">249</div>
<div class="t" style="left:681px;top:465px;width:77px;text-align:right;font-size:12px;line-height:14px;color:#000;overflow:hidden">248.5</div>
<div class="t" style="left:761px;top:465px;width:77px;text-align:right;font-size:12px;line-height:14px;color:#000;overflow:hidden">250</div>
<div class="t" style="left:841px;top:465px;width:77px;text-align:right;font-size:12px;line-height:14px;color:#000;overflow:hidden">199.10</div>
<div class="t" style="left:921px;top:465px;width:75px;text-align:right;font-size:12px;line-height:14px;color:#000;overflow:hidden">250</div>
<div class="a" style="left:57px;top:484px;width:784px;height:22px;background:#f1fbfc"></div>
<div class="a" style="left:842px;top:484px;width:157px;height:22px;background:#eef4e9"></div>
<div class="a" style="left:8px;top:484px;width:48px;height:22px;background:#e2eef4"></div>
<div class="t" style="left:7px;top:488px;width:49px;text-align:center;font-size:12px;line-height:14px;color:#1a1f55">9</div>
<div class="a" style="left:57px;top:507px;width:784px;height:22px;background:#fffffc"></div>
<div class="a" style="left:842px;top:507px;width:157px;height:22px;background:#eef4e9"></div>
<div class="a" style="left:8px;top:507px;width:48px;height:22px;background:#e2eef4"></div>
<div class="t" style="left:7px;top:511px;width:49px;text-align:center;font-size:12px;line-height:14px;color:#1a1f55">10</div>
<div class="a" style="left:57px;top:530px;width:784px;height:22px;background:#f1fbfc"></div>
<div class="a" style="left:842px;top:530px;width:157px;height:22px;background:#eef4e9"></div>
<div class="a" style="left:8px;top:530px;width:48px;height:22px;background:#e2eef4"></div>
<div class="t" style="left:7px;top:534px;width:49px;text-align:center;font-size:12px;line-height:14px;color:#1a1f55">11</div>
<div class="a" style="left:8px;top:553px;width:1007px;height:22px;background:#fffffc"></div>
<div class="a" style="left:842px;top:553px;width:173px;height:22px;background:#eef4e9"></div>
<div class="a" style="left:8px;top:553px;width:48px;height:22px;background:#f0eef0"></div>
<div class="a" style="left:7px;top:300px;width:992px;height:1px;background:#a9bfa9"></div>
<div class="a" style="left:7px;top:322px;width:992px;height:1px;background:#a9bfa9"></div>
<div class="a" style="left:7px;top:345px;width:992px;height:1px;background:#a9bfa9"></div>
<div class="a" style="left:7px;top:368px;width:992px;height:1px;background:#a9bfa9"></div>
<div class="a" style="left:7px;top:391px;width:992px;height:1px;background:#a9bfa9"></div>
<div class="a" style="left:7px;top:414px;width:992px;height:1px;background:#a9bfa9"></div>
<div class="a" style="left:7px;top:437px;width:992px;height:1px;background:#a9bfa9"></div>
<div class="a" style="left:7px;top:460px;width:992px;height:1px;background:#a9bfa9"></div>
<div class="a" style="left:7px;top:483px;width:992px;height:1px;background:#a9bfa9"></div>
<div class="a" style="left:7px;top:506px;width:992px;height:1px;background:#a9bfa9"></div>
<div class="a" style="left:7px;top:529px;width:992px;height:1px;background:#a9bfa9"></div>
<div class="a" style="left:7px;top:552px;width:1009px;height:1px;background:#a9bfa9"></div>
<div class="a" style="left:7px;top:575px;width:1009px;height:1px;background:#a9bfa9"></div>
<div class="a" style="left:7px;top:300px;width:1px;height:276px;background:#a9bfa9"></div>
<div class="a" style="left:56px;top:300px;width:1px;height:276px;background:#a9bfa9"></div>
<div class="a" style="left:121px;top:300px;width:1px;height:276px;background:#a9bfa9"></div>
<div class="a" style="left:201px;top:300px;width:1px;height:276px;background:#a9bfa9"></div>
<div class="a" style="left:281px;top:300px;width:1px;height:276px;background:#a9bfa9"></div>
<div class="a" style="left:361px;top:300px;width:1px;height:276px;background:#a9bfa9"></div>
<div class="a" style="left:441px;top:300px;width:1px;height:276px;background:#a9bfa9"></div>
<div class="a" style="left:521px;top:300px;width:1px;height:276px;background:#a9bfa9"></div>
<div class="a" style="left:601px;top:300px;width:1px;height:276px;background:#a9bfa9"></div>
<div class="a" style="left:681px;top:300px;width:1px;height:276px;background:#a9bfa9"></div>
<div class="a" style="left:761px;top:300px;width:1px;height:276px;background:#a9bfa9"></div>
<div class="a" style="left:841px;top:300px;width:1px;height:276px;background:#a9bfa9"></div>
<div class="a" style="left:921px;top:300px;width:1px;height:276px;background:#a9bfa9"></div>
<div class="a" style="left:999px;top:300px;width:1px;height:276px;background:#a9bfa9"></div>
<div class="a" style="left:1001px;top:552px;width:1px;height:24px;background:#a9bfa9"></div>
<div class="a" style="left:1015px;top:552px;width:1px;height:24px;background:#a9bfa9"></div>
<div class="a" style="left:999px;top:300px;width:16px;height:252px;background:#ededed;border-left:1px solid #f8f8f8"></div>
<div class="a" style="left:1003px;top:305px;width:0;height:0;border-left:4px solid transparent;border-right:4px solid transparent;border-bottom:5px solid #777"></div>
<div class="a" style="left:1003px;top:543px;width:0;height:0;border-left:4px solid transparent;border-right:4px solid transparent;border-top:5px solid #777"></div>
<div class="a" style="left:999px;top:326px;width:15px;height:15px;background:linear-gradient(90deg,#fafafa,#d8d8d8);border:1px solid #8a8a8a;border-radius:2px"></div>
<div class="a" style="left:6px;top:576px;width:1010px;height:17px;background:#ebebeb;border-top:1px solid #fafafa"></div>
<div class="a" style="left:12px;top:581px;width:0;height:0;border-top:4px solid transparent;border-bottom:4px solid transparent;border-right:5px solid #777"></div>
<div class="a" style="left:1005px;top:581px;width:0;height:0;border-top:4px solid transparent;border-bottom:4px solid transparent;border-left:5px solid #777"></div>
<div class="a" style="left:507px;top:578px;width:15px;height:15px;background:linear-gradient(180deg,#f6f6f6,#d6d6d6);border:1px solid #7a7a7a;border-radius:2px"></div>
<div class="a" style="left:7px;top:593px;width:1009px;height:59px;background:#fffaf0"></div>
<div class="t" style="left:15px;top:603px;font-size:12px;line-height:14px;color:#000;font-family:'Liberation Sans',sans-serif;"><i class="c">业</i><i class="c">务</i><i class="c">部</i><i class="c">门</i></div>
<div class="inp" style="left:74px;top:598px;width:104px;height:21px;background:#e6f6fd;"></div>
<div class="dd" style="left:160px;top:600px;width:17px;height:18px"><i style="border-top-color:#a8a8a8"></i></div>
<div class="t" style="left:77px;top:601px;font-size:12px;line-height:14px;color:#a8a8a8;font-family:'Liberation Sans',sans-serif;"><i class="c">质</i><i class="c">管</i><i class="c">科</i></div>
<div class="t" style="left:185px;top:603px;font-size:12px;line-height:14px;color:#000;font-family:'Liberation Sans',sans-serif;"><i class="c">业</i><i class="c">务</i><i class="c">员</i></div>
<div class="inp" style="left:229px;top:598px;width:86px;height:21px;background:#e6f6fd;"></div>
<div class="dd" style="left:297px;top:600px;width:17px;height:18px"><i style="border-top-color:#a8a8a8"></i></div>
<div class="t" style="left:232px;top:601px;font-size:12px;line-height:14px;color:#a8a8a8;font-family:'Liberation Sans',sans-serif;"><i class="c">金</i><i class="c">平</i></div>
<div class="t" style="left:321px;top:606px;font-size:10px;line-height:12px;color:#a0a0a0;font-family:'Liberation Sans',sans-serif;">...</div>
<div class="t" style="left:340px;top:603px;font-size:12px;line-height:14px;color:#000;font-family:'Liberation Sans',sans-serif;"><i class="c">制</i><i class="c">单</i><i class="c">人</i></div>
<div class="a" style="left:382px;top:601px;width:67px;height:18px;border:1px solid #22228a;background:#fffdf6"></div>
<div class="t" style="left:382px;top:603px;width:67px;text-align:center;font-size:12px;line-height:14px;color:#d01010"><i class="c">金</i><i class="c">平</i></div>
<div class="t" style="left:455px;top:603px;font-size:12px;line-height:14px;color:#2a7a86;font-family:'Liberation Sans',sans-serif;">2010-12-25</div>
<div class="t" style="left:528px;top:603px;font-size:12px;line-height:14px;color:#000;font-family:'Liberation Sans',sans-serif;"><i class="c">审</i><i class="c">核</i><i class="c">员</i></div>
<div class="a" style="left:569px;top:601px;width:64px;height:18px;border:1px solid #22228a;background:#fffdf6"></div>
<div class="t" style="left:569px;top:603px;width:64px;text-align:center;font-size:12px;line-height:14px;color:#d01010"><i class="c">金</i><i class="c">平</i></div>
<div class="t" style="left:642px;top:603px;font-size:12px;line-height:14px;color:#2a7a86;font-family:'Liberation Sans',sans-serif;">2010-12-25</div>
<div class="t" style="left:15px;top:629px;font-size:12px;line-height:14px;color:#000;font-family:'Liberation Sans',sans-serif;"><i class="c">备</i></div>
<div class="t" style="left:52px;top:629px;font-size:12px;line-height:14px;color:#000;font-family:'Liberation Sans',sans-serif;"><i class="c">注</i></div>
<div class="inp" style="left:74px;top:626px;width:631px;height:21px;background:#fff;"></div>
<div class="a" style="left:7px;top:651px;width:1009px;height:22px;background:#f2f2f2;border-top:1px solid #d8d8d8"></div>
<div class="a" style="left:8px;top:652px;width:300px;height:21px;border:1px solid;border-color:#a0a0a0 #fff #fff #a0a0a0"></div>
<div class="a" style="left:309px;top:652px;width:706px;height:21px;border:1px solid;border-color:#a0a0a0 #fff #fff #a0a0a0"></div>
<div class="t" style="left:17px;top:655px;font-size:12px;line-height:14px;color:#000;font-family:'Liberation Sans',sans-serif;"><i class="c">提</i><i class="c">示</i><i class="c">：</i></div>
<div class="t" style="left:60px;top:655px;font-size:12px;line-height:14px;color:#000;font-family:'Liberation Sans',sans-serif;"><i class="c">按</i></div>
<div class="t" style="left:72px;top:655px;font-size:12px;line-height:14px;letter-spacing:-1.2px;color:#000;font-family:'Liberation Mono',monospace;">F2</div>
<div class="t" style="left:84px;top:655px;font-size:12px;line-height:14px;color:#000;font-family:'Liberation Sans',sans-serif;"><i class="c">键</i><i class="c">进</i><i class="c">行</i><i class="c">明</i><i class="c">细</i><i class="c">切</i><i class="c">换</i><i class="c">，</i></div>
<div class="t" style="left:180px;top:655px;font-size:12px;line-height:14px;letter-spacing:-1.2px;color:#000;font-family:'Liberation Mono',monospace;">F3</div>
<div class="t" style="left:192px;top:655px;font-size:12px;line-height:14px;color:#000;font-family:'Liberation Sans',sans-serif;"><i class="c">键</i><i class="c">显</i><i class="c">示</i><i class="c">单</i><i class="c">据</i><i class="c">列</i><i class="c">表</i></div>
<div class="a" style="left:0px;top:679px;width:1024px;height:3px;background:#ece9f2"></div>
<div class="a" style="left:0px;top:682px;width:1024px;height:1px;background:#a0a8b0"></div>
<div class="a" style="left:0px;top:683px;width:1024px;height:23px;background:#fefefe"></div>
<div class="t" style="left:8px;top:689px;font-size:12px;line-height:14px;color:#000;font-family:'Liberation Sans',sans-serif;"><i class="c">常</i><i class="c">鼓</i><i class="c">管</i><i class="c">理</i></div>
<div class="t" style="left:60px;top:689px;font-size:12px;line-height:14px;letter-spacing:-1.2px;color:#000;font-family:'Liberation Mono',monospace;">o</div>
<div class="a" style="left:75px;top:686px;width:1px;height:18px;background:#a0a0a0"></div>
<div class="a" style="left:76px;top:686px;width:1px;height:18px;background:#fff"></div>
<div class="t" style="left:87px;top:689px;font-size:12px;line-height:14px;color:#000;font-family:'Liberation Sans',sans-serif;"><i class="c">检</i><i class="c">验</i><i class="c">入</i><i class="c">库</i><i class="c">单</i></div>
<div class="a" style="left:156px;top:686px;width:1px;height:18px;background:#a0a0a0"></div>
<div class="a" style="left:157px;top:686px;width:1px;height:18px;background:#fff"></div>
<div class="a" style="left:162px;top:687px;width:61px;height:18px;border:1px solid;border-color:#808080 #fff #fff #808080;box-shadow:inset 1px 1px 0 #404040;background:#f0f0f0"></div>
<div class="t" style="left:168px;top:690px;font-size:12px;line-height:14px;color:#000;font-family:'Liberation Sans',sans-serif;"><i class="c">质</i><i class="c">量</i><i class="c">检</i><i class="c">查</i></div>
<div class="a" style="left:227px;top:686px;width:1px;height:18px;background:#a0a0a0"></div>
<div class="a" style="left:228px;top:686px;width:1px;height:18px;background:#fff"></div>
<div class="a" style="left:0px;top:705px;width:1024px;height:21px;background:#f0f0f0"></div>
<div class="a" style="left:3px;top:706px;width:146px;height:19px;border:1px solid;border-color:#a0a0a0 #fff #fff #a0a0a0"></div>
<div class="a" style="left:152px;top:706px;width:52px;height:19px;border:1px solid;border-color:#a0a0a0 #fff #fff #a0a0a0"></div>
<div class="a" style="left:207px;top:706px;width:59px;height:19px;border:1px solid;border-color:#a0a0a0 #fff #fff #a0a0a0"></div>
<div class="a" style="left:268px;top:706px;width:47px;height:19px;border:1px solid;border-color:#a0a0a0 #fff #fff #a0a0a0"></div>
<div class="a" style="left:318px;top:706px;width:247px;height:19px;border:1px solid;border-color:#a0a0a0 #fff #fff #a0a0a0"></div>
<div class="a" style="left:567px;top:706px;width:60px;height:19px;border:1px solid;border-color:#a0a0a0 #fff #fff #a0a0a0"></div>
<div class="a" style="left:629px;top:706px;width:64px;height:19px;border:1px solid;border-color:#a0a0a0 #fff #fff #a0a0a0"></div>
<div class="a" style="left:697px;top:706px;width:197px;height:19px;border:1px solid;border-color:#a0a0a0 #fff #fff #a0a0a0"></div>
<div class="a" style="left:897px;top:706px;width:125px;height:19px;border:1px solid;border-color:#a0a0a0 #fff #fff #a0a0a0"></div>
<div class="t" style="left:8px;top:709px;font-size:12px;line-height:14px;color:#000;font-family:'Liberation Sans',sans-serif;"><i class="c">开</i><i class="c">发</i><i class="c">组</i><i class="c">织</i></div>
<div class="t" style="left:62px;top:709px;font-size:12px;line-height:14px;letter-spacing:-1.2px;color:#000;font-family:'Liberation Mono',monospace;">www.onlyit.cn</div>
<div class="t" style="left:158px;top:709px;font-size:12px;line-height:14px;color:#000;font-family:'Liberation Sans',sans-serif;"><i class="c">操</i><i class="c">作</i><i class="c">员</i></div>
<div class="t" style="left:224px;top:709px;font-size:12px;line-height:14px;color:#000;font-family:'Liberation Sans',sans-serif;"><i class="c">金</i><i class="c">平</i></div>
<div class="t" style="left:280px;top:709px;font-size:12px;line-height:14px;color:#000;font-family:'Liberation Sans',sans-serif;"><i class="c">工</i><i class="c">号</i></div>
<div class="t" style="left:486px;top:709px;font-size:12px;line-height:14px;letter-spacing:-1.2px;color:#000;font-family:'Liberation Mono',monospace;">13</div>
<div class="t" style="left:512px;top:709px;font-size:12px;line-height:14px;letter-spacing:-1.2px;color:#000;font-family:'Liberation Mono',monospace;">(</div>
<div class="t" style="left:518px;top:709px;font-size:12px;line-height:14px;color:#000;font-family:'Liberation Sans',sans-serif;"><i class="c">星</i><i class="c">期</i><i class="c">六</i></div>
<div class="t" style="left:554px;top:709px;font-size:12px;line-height:14px;letter-spacing:-1.2px;color:#000;font-family:'Liberation Mono',monospace;">)</div>
<div class="t" style="left:570px;top:709px;font-size:12px;line-height:14px;color:#000;font-family:'Liberation Sans',sans-serif;"><i class="c">编</i><i class="c">译</i><i class="c">日</i><i class="c">期</i></div>
<div class="t" style="left:630px;top:709px;font-size:12px;line-height:14px;letter-spacing:-1.2px;color:#000;font-family:'Liberation Mono',monospace;">2010-12-19</div>
<div class="a" style="left:336px;top:702px;width:154px;height:20px;background:linear-gradient(180deg,#f4f8fc,#dde8f4);border:1px solid #8aa6c4;border-radius:3px"></div>
<svg class="a" style="left:342px;top:706px" width="9" height="10" viewBox="0 0 9 10"><path d="M3 0 L6 0 L6 5 L9 5 L4.5 10 L0 5 L3 5 Z" fill="#f0a010"/></svg>
<div class="t" style="left:376px;top:707px;font-size:10px;line-height:12px;color:#000;font-family:'Liberation Sans',sans-serif;">0KB/S</div>
<div class="a" style="left:410px;top:705px;width:1px;height:14px;background:#c0ccd8"></div>
<svg class="a" style="left:417px;top:706px" width="9" height="10" viewBox="0 0 9 10"><path d="M3 10 L6 10 L6 5 L9 5 L4.5 0 L0 5 L3 5 Z" fill="#20a020"/></svg>
<div class="t" style="left:450px;top:707px;font-size:10px;line-height:12px;color:#000;font-family:'Liberation Sans',sans-serif;">0KB/S</div>
<div class="a" style="left:0px;top:726px;width:1024px;height:42px;background:linear-gradient(180deg,#0a0e12 0px,#0a0e12 3px,#8a949e 3px,#8a949e 4px,#3a4856 4px,#34424f 40%,#2e3c49 100%)"></div>
<svg class="a" style="left:10px;top:729px" width="40" height="39" viewBox="0 0 40 39">
<defs><radialGradient id="orb" cx="50%" cy="40%" r="60%"><stop offset="0" stop-color="#7fd0f0"/><stop offset=".6" stop-color="#1a70b0"/><stop offset="1" stop-color="#0a3050"/></radialGradient></defs>
<circle cx="20" cy="20" r="18" fill="url(#orb)" stroke="#6a8aa0" stroke-width="1"/>
<path d="M11 12 Q15 10 19 12 L18 19 Q14 17 10 19 Z" fill="#f05020"/>
<path d="M21 12 Q25 14 29 12 L28 19 Q24 21 20 19 Z" fill="#80c030"/>
<path d="M10 21 Q14 19 18 21 L17 28 Q13 26 9 28 Z" fill="#2090e0"/>
<path d="M20 21 Q24 23 28 21 L27 28 Q23 30 19 28 Z" fill="#f0c020"/>
<ellipse cx="20" cy="10" rx="13" ry="7" fill="rgba(255,255,255,.25)"/>
</svg>
<div class="a" style="left:67px;top:731px;width:1px;height:35px;background:repeating-linear-gradient(180deg,#7a8a9a 0 1px,transparent 1px 3px)"></div>
<div class="a" style="left:70px;top:731px;width:1px;height:35px;background:repeating-linear-gradient(180deg,#7a8a9a 0 1px,transparent 1px 3px)"></div>
<div class="a" style="left:168px;top:731px;width:1px;height:35px;background:repeating-linear-gradient(180deg,#7a8a9a 0 1px,transparent 1px 3px)"></div>
<div class="a" style="left:171px;top:731px;width:1px;height:35px;background:repeating-linear-gradient(180deg,#7a8a9a 0 1px,transparent 1px 3px)"></div>
<div class="a" style="left:849px;top:731px;width:1px;height:35px;background:repeating-linear-gradient(180deg,#7a8a9a 0 1px,transparent 1px 3px)"></div>
<div class="a" style="left:852px;top:731px;width:1px;height:35px;background:repeating-linear-gradient(180deg,#7a8a9a 0 1px,transparent 1px 3px)"></div>
<div class="a" style="left:927px;top:731px;width:1px;height:35px;background:repeating-linear-gradient(180deg,#7a8a9a 0 1px,transparent 1px 3px)"></div>
<div class="a" style="left:930px;top:731px;width:1px;height:35px;background:repeating-linear-gradient(180deg,#7a8a9a 0 1px,transparent 1px 3px)"></div>
<svg class="a" style="left:79px;top:739px" width="15" height="15" viewBox="0 0 15 15"><rect x="1" y="1" width="13" height="13" rx="3" fill="#e8f6ff" stroke="#4a80b0" stroke-width="1"/><path d="M11 4 A4.5 4.5 0 1 0 11 10 M7 7 h5 M5 9 l3 -3" fill="none" stroke="#1a3050" stroke-width="1.6"/></svg>
<svg class="a" style="left:102px;top:740px" width="16" height="15" viewBox="0 0 16 15"><rect x="0" y="0" width="16" height="15" fill="#2a70d0"/><rect x="0" y="3" width="6" height="12" fill="#0a2a70"/><path d="M0 1 h8 v2 h-8 Z" fill="#a0e060"/><path d="M8 4 Q14 4 14 9 L14 14 L8 14 Z" fill="#40b0f8"/><circle cx="10" cy="6" r="1" fill="#fff"/></svg>
<svg class="a" style="left:124px;top:739px" width="18" height="18" viewBox="0 0 18 18"><path d="M4.5 10 A5 5 0 1 1 14 10 L6.5 10 A3.5 3.5 0 0 0 13 12.5" fill="none" stroke="#30a8f0" stroke-width="2.6"/><ellipse cx="9" cy="9" rx="8.5" ry="4" fill="none" stroke="#e8b820" stroke-width="1.4" transform="rotate(-35 9 9)"/></svg>
<svg class="a" style="left:152px;top:735px" width="10" height="7" viewBox="0 0 10 7"><path d="M1 0.5 L4 3.5 L1 6.5 M5 0.5 L8 3.5 L5 6.5" fill="none" stroke="#fff" stroke-width="1.6"/></svg>
<div class="a" style="left:178px;top:729px;width:159px;height:39px;background:radial-gradient(ellipse 60% 55% at 55% 55%,#72808e 0%,#98a4b0 55%,#d4dce2 100%);border:1px solid #0e141a;box-shadow:inset 0 0 0 1px #c8d0d8"></div>
<svg class="a" style="left:194px;top:739px" width="17" height="17" viewBox="0 0 17 17"><path d="M5 3 h3 v-2 h5 v2 h3 v9 h-11 Z" fill="#000"/><rect x="6" y="4" width="8" height="5" fill="#fff"/><path d="M2.5 5.5 h3 v-2 h5 v2 h3 v9 h-11 Z" fill="#000"/><rect x="3.5" y="6.5" width="8" height="5" fill="#fff"/><path d="M0 8 h3 v-2 h5 v2 h3 v9 h-11 Z" fill="#000"/><rect x="1" y="9" width="8" height="5" fill="#fff"/><path d="M2 10 h5 M2 12 h3 M5 12 h3" stroke="#888" stroke-width=".8"/></svg>
<div class="t" style="left:214px;top:741px;font-size:12px;line-height:14px;color:#fff;font-family:'Liberation Sans',sans-serif;text-shadow:0 0 2px #405060"><i class="c">常</i><i class="c">鼓</i><i class="c">管</i><i class="c">理</i></div>
<div class="t" style="left:262px;top:741px;font-size:12px;line-height:14px;letter-spacing:-1.2px;color:#fff;font-family:'Liberation Mono',monospace;text-shadow:0 0 2px #405060">-20101210</div>
<div class="a" style="left:338px;top:729px;width:159px;height:39px;background:linear-gradient(170deg,#b4c2d0 0%,#8a9cae 35%,#6e8498 60%,#647a90 100%);border:1px solid #0e141a;box-shadow:inset 0 1px 0 #c0ccd8"></div>
<div class="a" style="left:353px;top:740px;width:14px;height:14px;background:#2a7a2a;border:1px solid #0a3a0a"></div>
<div class="t" style="left:356px;top:740px;font-size:11px;line-height:13px;color:#fff;font-family:'Liberation Sans',sans-serif;font-weight:bold">X</div>
<div class="t" style="left:373px;top:741px;font-size:12px;line-height:14px;letter-spacing:-1.2px;color:#fff;font-family:'Liberation Mono',monospace;">Microsoft Excel</div>
<div class="a" style="left:498px;top:729px;width:158px;height:39px;background:linear-gradient(170deg,#b4c2d0 0%,#8a9cae 35%,#6e8498 60%,#647a90 100%);border:1px solid #0e141a;box-shadow:inset 0 1px 0 #c0ccd8"></div>
<div class="a" style="left:512px;top:740px;width:13px;height:14px;background:linear-gradient(90deg,#c89010,#f8d050);border-radius:1px"></div>
<div class="t" style="left:531px;top:741px;font-size:12px;line-height:14px;letter-spacing:-1.2px;color:#fff;font-family:'Liberation Mono',monospace;">QFF№7.2A30(90°&nbsp;)</div>
<div class="a" style="left:657px;top:729px;width:159px;height:39px;background:linear-gradient(170deg,#b4c2d0 0%,#8a9cae 35%,#6e8498 60%,#647a90 100%);border:1px solid #0e141a;box-shadow:inset 0 1px 0 #c0ccd8"></div>
<div class="a" style="left:671px;top:740px;width:15px;height:14px;background:#e04020;border:1px solid #802010"></div>
<div class="a" style="left:674px;top:744px;width:9px;height:1px;background:#fff"></div>
<div class="a" style="left:674px;top:747px;width:9px;height:1px;background:#fff"></div>
<div class="a" style="left:674px;top:750px;width:9px;height:1px;background:#fff"></div>
<div class="t" style="left:691px;top:741px;font-size:12px;line-height:14px;color:#fff;font-family:'Liberation Sans',sans-serif;"><i class="c">金</i><i class="c">山</i><i class="c">文</i><i class="c">字</i></div>
<div class="t" style="left:739px;top:741px;font-size:12px;line-height:14px;letter-spacing:-1.2px;color:#fff;font-family:'Liberation Mono',monospace;">&nbsp;2003&nbsp;...</div>
<svg class="a" style="left:859px;top:741px" width="17" height="12" viewBox="0 0 17 12"><path d="M9 0 v3" stroke="#ccc"/><rect x="0.5" y="3.5" width="16" height="8" rx="1" fill="#e8e8e8" stroke="#222"/><path d="M2 6 h13 M2 8 h13" stroke="#555" stroke-dasharray="1 1"/></svg>
<div class="a" style="left:882px;top:740px;width:14px;height:13px;background:#f0e060;border:1px solid #222"></div>
<div class="t" style="left:885px;top:740px;font-size:11px;line-height:13px;color:#000;font-family:'Liberation Sans',sans-serif;font-weight:bold">?</div>
<div class="a" style="left:906px;top:737px;width:7px;height:5px;border:1px solid #ddd"></div>
<div class="a" style="left:906px;top:747px;width:0;height:0;border-left:3px solid transparent;border-right:3px solid transparent;border-top:3px solid #ddd"></div>
<div class="a" style="left:954px;top:746px;width:0;height:0;border-left:4px solid transparent;border-right:4px solid transparent;border-bottom:5px solid #fff"></div>
<div class="t" style="left:978px;top:732px;font-size:12px;line-height:14px;letter-spacing:-1.2px;color:#fff;font-family:'Liberation Mono',monospace;">10:41</div>
<div class="a" style="left:1013px;top:729px;width:11px;height:39px;background:linear-gradient(90deg,#4a5a6a,#8a9aaa 40%,#5a6a7a);border-left:1px solid #101820"></div>
<div class="t" style="left:976px;top:749px;font-size:12px;line-height:14px;color:#fff;font-family:'Liberation Sans',sans-serif;"><i class="c">星</i><i class="c">期</i><i class="c">六</i></div>
</body></html>
